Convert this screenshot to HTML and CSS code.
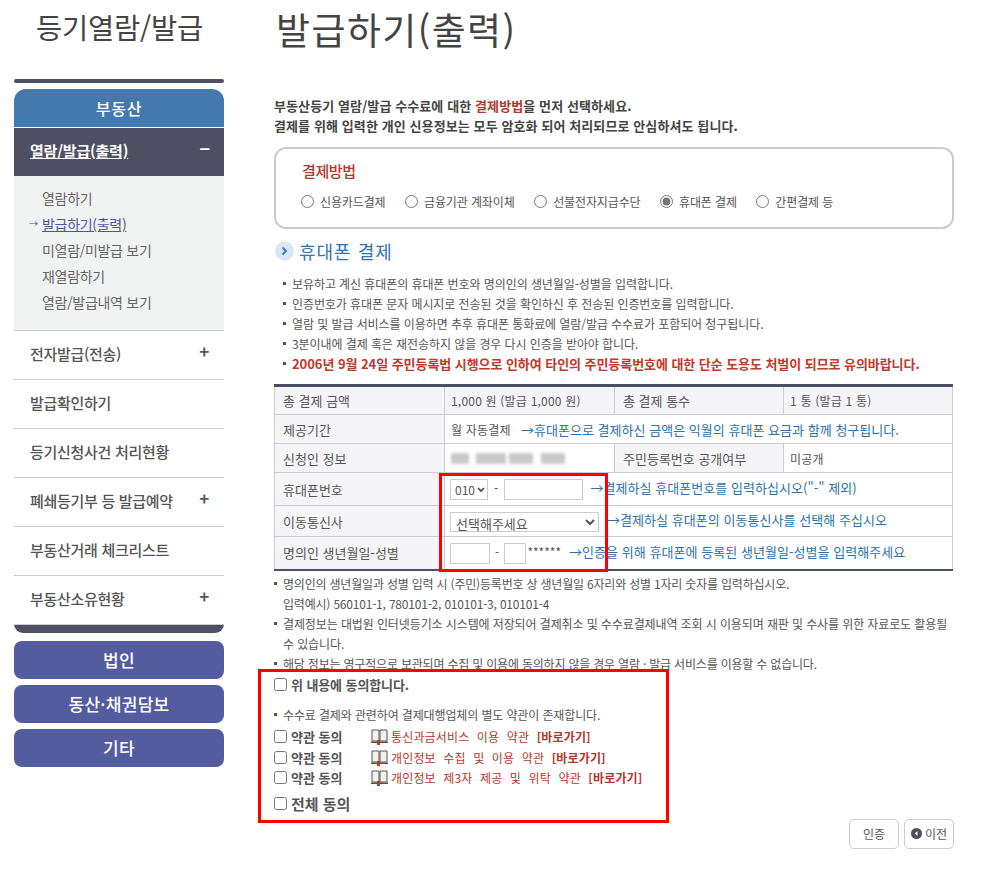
FILE: index.html
```html
<!DOCTYPE html>
<html lang="ko">
<head>
<meta charset="utf-8">
<title>발급하기(출력)</title>
<link rel="stylesheet" href="styles.css">
</head>
<body>
<div class="page">
  <aside class="side">
    <h2 class="side-title">등기열람/발급</h2>
    <div class="side-bar-top"></div>
    <div class="cat-head">부동산</div>
    <div class="active-item"><a href="#">열람/발급(출력)</a><span class="sign">−</span></div>
    <ul class="sub">
      <li>열람하기</li>
      <li class="cur"><span class="cur-arrow">→</span><a href="#">발급하기(출력)</a></li>
      <li>미열람/미발급 보기</li>
      <li>재열람하기</li>
      <li>열람/발급내역 보기</li>
    </ul>
    <div class="item"><span>전자발급(전송)</span><span class="sign">+</span></div>
    <div class="item"><span>발급확인하기</span></div>
    <div class="item"><span>등기신청사건 처리현황</span></div>
    <div class="item"><span>폐쇄등기부 등 발급예약</span><span class="sign">+</span></div>
    <div class="item"><span>부동산거래 체크리스트</span></div>
    <div class="item"><span>부동산소유현황</span><span class="sign">+</span></div>
    <div class="side-bar-bottom"></div>
    <div class="cat-btn">법인</div>
    <div class="cat-btn">동산·채권담보</div>
    <div class="cat-btn">기타</div>
  </aside>
  <main class="main">
    <h1 class="title">발급하기(출력)</h1>
    <p class="intro">부동산등기 열람/발급 수수료에 대한 <em>결제방법</em>을 먼저 선택하세요.<br>결제를 위해 입력한 개인 신용정보는 모두 암호화 되어 처리되므로 안심하셔도 됩니다.</p>
    <section class="pay-box">
      <h3 class="pay-title">결제방법</h3>
      <div class="pay-opts">
        <label class="opt"><input type="radio" name="pay">신용카드결제</label>
        <label class="opt"><input type="radio" name="pay">금융기관 계좌이체</label>
        <label class="opt"><input type="radio" name="pay">선불전자지급수단</label>
        <label class="opt"><input type="radio" name="pay" checked>휴대폰 결제</label>
        <label class="opt"><input type="radio" name="pay">간편결제 등</label>
      </div>
    </section>
    <h3 class="sec-head">
      <svg class="sec-icon" width="19" height="20" viewBox="0 0 19 20"><circle cx="9.500" cy="10" r="9.500" fill="#d9e6f3"/><path d="M7.500 6.500l3.500 3.500-3.500 3.500" fill="none" stroke="#3f7fb8" stroke-width="2"/></svg>
      휴대폰 결제
    </h3>
    <ul class="notes top-notes">
      <li>보유하고 계신 휴대폰의 휴대폰 번호와 명의인의 생년월일-성별을 입력합니다.</li>
      <li>인증번호가 휴대폰 문자 메시지로 전송된 것을 확인하신 후 전송된 인증번호를 입력합니다.</li>
      <li>열람 및 발급 서비스를 이용하면 추후 휴대폰 통화료에 열람/발급 수수료가 포함되어 청구됩니다.</li>
      <li>3분이내에 결제 혹은 재전송하지 않을 경우 다시 인증을 받아야 합니다.</li>
      <li class="warn">2006년 9월 24일 주민등록법 시행으로 인하여 타인의 주민등록번호에 대한 단순 도용도 처벌이 되므로 유의바랍니다.</li>
    </ul>
    <div class="table-wrap">
      <table class="pay-table">
        <colgroup><col class="c1"><col class="c2"><col class="c3"><col class="c4"></colgroup>
        <tr class="r29"><th>총 결제 금액</th><td class="shade">1,000 원 (발급 1,000 원)</td><th>총 결제 통수</th><td class="shade">1 통 (발급 1 통)</td></tr>
        <tr class="r29"><th>제공기간</th><td colspan="3">월 자동결제 &nbsp;<span class="hint hint-t">→휴대폰으로 결제하신 금액은 익월의 휴대폰 요금과 함께 청구됩니다.</span></td></tr>
        <tr class="r29"><th>신청인 정보</th><td><span class="blur"><i class="b1"></i><i class="b2"></i><i class="b3"></i><i class="b4"></i></span></td><th>주민등록번호 공개여부</th><td>미공개</td></tr>
        <tr class="r33"><th>휴대폰번호</th><td colspan="3" class="form-cell"><span class="sel-wrap"><select class="sel-010"><option>010</option></select><svg class="chev" width="8" height="6" viewBox="0 0 8 6"><path d="M1 1l3 3 3-3" fill="none" stroke="#444" stroke-width="1.600"/></svg></span><span class="dash">-</span><input class="in-phone" type="text"><span class="hint hint-a">→결제하실 휴대폰번호를 입력하십시오("-" 제외)</span></td></tr>
        <tr class="r31"><th>이동통신사</th><td colspan="3" class="form-cell"><select class="sel-tel"><option>선택해주세요</option></select><span class="hint hint-b">→결제하실 휴대폰의 이동통신사를 선택해 주십시오</span></td></tr>
        <tr class="r33"><th>명의인 생년월일-성별</th><td colspan="3" class="form-cell"><input class="in-birth" type="text"><span class="dash dash-b">-</span><input class="in-sex" type="text"><span class="stars">******</span><span class="hint hint-c">→인증을 위해 휴대폰에 등록된 생년월일-성별을 입력해주세요</span></td></tr>
      </table>
      <div class="mark mark-form"></div>
    </div>
    <ul class="notes low-notes">
      <li>명의인의 생년월일과 성별 입력 시 (주민)등록번호 상 생년월일 6자리와 성별 1자리 숫자를 입력하십시오.<br>입력예시) 560101-1, 780101-2, 010101-3, 010101-4</li>
      <li class="tight">결제정보는 대법원 인터넷등기소 시스템에 저장되어 결제취소 및 수수료결제내역 조회 시 이용되며 재판 및 수사를 위한 자료로도 활용될<br>수 있습니다.</li>
      <li>해당 정보는 영구적으로 보관되며 수집 및 이용에 동의하지 않을 경우 열람 · 발급 서비스를 이용할 수 없습니다.</li>
    </ul>
    <div class="agree-wrap">
      <label class="agree-main"><input type="checkbox">위 내용에 동의합니다.</label>
      <ul class="notes agree-note"><li>수수료 결제와 관련하여 결제대행업체의 별도 약관이 존재합니다.</li></ul>
      <div class="terms">
        <div class="term"><label class="term-check"><input type="checkbox">약관 동의</label><svg class="book" width="17" height="17" viewBox="0 0 17 17"><path d="M1 2h7v11H1zM9 2h7v11H9z" fill="#f4f2ea" stroke="#555"/><path d="M0 13.500h17V15H0z" fill="#555"/><path d="M6 12h3v5H6z" fill="#c23a12"/></svg><a class="term-link" href="#">통신과금서비스 이용 약관 <b>[바로가기]</b></a></div>
        <div class="term"><label class="term-check"><input type="checkbox">약관 동의</label><svg class="book" width="17" height="17" viewBox="0 0 17 17"><path d="M1 2h7v11H1zM9 2h7v11H9z" fill="#f4f2ea" stroke="#555"/><path d="M0 13.500h17V15H0z" fill="#555"/><path d="M6 12h3v5H6z" fill="#c23a12"/></svg><a class="term-link" href="#">개인정보 수집 및 이용 약관 <b>[바로가기]</b></a></div>
        <div class="term"><label class="term-check"><input type="checkbox">약관 동의</label><svg class="book" width="17" height="17" viewBox="0 0 17 17"><path d="M1 2h7v11H1zM9 2h7v11H9z" fill="#f4f2ea" stroke="#555"/><path d="M0 13.500h17V15H0z" fill="#555"/><path d="M6 12h3v5H6z" fill="#c23a12"/></svg><a class="term-link" href="#">개인정보 제3자 제공 및 위탁 약관 <b>[바로가기]</b></a></div>
      </div>
      <label class="agree-all"><input type="checkbox">전체 동의</label>
      <div class="mark mark-agree"></div>
    </div>
    <div class="actions">
      <button class="btn" type="button">인증</button>
      <button class="btn btn-prev" type="button"><svg width="11" height="11" viewBox="0 0 11 11"><circle cx="5.500" cy="5.500" r="5.500" fill="#4f4f63"/><path d="M6.500 3L3.800 5.500 6.500 8z" fill="#fff"/></svg>이전</button>
    </div>
  </main>
</div>
</body>
</html>
```
FILE: styles.css
```css
* { box-sizing: border-box; }
html, body { margin: 0; padding: 0; background: #fff; }
body { font-family: "Noto Sans CJK KR", "Noto Sans", sans-serif; color: #555; font-size: 12px; }
a { color: inherit; }
ul { list-style: none; margin: 0; padding: 0; }
.page { display: flex; align-items: flex-start; width: 1007px; height: 879px; overflow: hidden; }
.side { width: 210px; margin-left: 14px; flex: none; }
.side-title { margin: 0; height: 79px; padding-top: 7px; padding-left: 1px; text-align: center; font-size: 28.500px; line-height: 40px; font-weight: 400; color: #444; letter-spacing: -0.2px; }
.side-bar-top { height: 4px; border-radius: 2px; background: #4f4f63; margin-bottom: 6px; }
.cat-head { height: 38px; line-height: 38px; text-align: center; color: #fff; font-size: 16px; font-weight: 500; letter-spacing: 0.8px; background: #4479ad; border-radius: 12px 12px 0 0; }
.active-item { margin-top: 1px; height: 48px; background: #4f4f63; color: #fff; display: flex; justify-content: space-between; padding: 0 14px 4px 16px; align-items: center; font-size: 15px; font-weight: 700; letter-spacing: -0.2px; }
.active-item .sign { font-size: 18px; margin-top: -4px; }
.sub { height: 155px; padding-top: 9px; background: #f1f3f2; border-bottom: 1px solid #ccc; font-size: 14px; letter-spacing: -0.3px; color: #666; }
.sub li { height: 26px; line-height: 26px; padding-left: 28px; }
.sub .cur { padding-left: 15px; color: #4a559f; display: flex; }
.cur-arrow { width: 13px; font-size: 9px; }
.item { height: 49px; display: flex; justify-content: space-between; align-items: center; padding: 0 14px 4px 16px; border-bottom: 1px solid #ccc; font-size: 15px; font-weight: 500; letter-spacing: -0.3px; color: #555; }
.item .sign { font-size: 17px; font-weight: 700; margin-top: -6px; margin-right: 1px; }
.side-bar-bottom { height: 9px; margin-top: -1px; background: #4f4f63; border-radius: 0 0 10px 10px; margin-bottom: 8px; border-top: 1px solid #ccc; }
.cat-btn { height: 38px; line-height: 37px; margin-bottom: 6px; border-radius: 8px; background: #525c9e; color: #fff; text-align: center; font-size: 17px; font-weight: 500; letter-spacing: 0.3px; }
.main { width: 680px; margin-left: 50px; flex: none; position: relative; }
.title { margin: 0; height: 96px; padding-top: 5px; padding-left: 2px; font-size: 37px; line-height: 48px; font-weight: 400; color: #444; letter-spacing: 1.400px; }
.intro { margin: 0 0 11px; font-size: 13px; line-height: 20px; font-weight: 700; color: #444; letter-spacing: 0.1px; }
.intro em { font-style: normal; color: #b8352a; }
.pay-box { height: 82px; border: 2px solid #ccc; border-radius: 12px; padding: 11px 0 0 26px; }
.pay-title { margin: 0 0 9px; font-size: 15px; line-height: 22px; font-weight: 500; color: #b8352a; letter-spacing: -0.4px; }
.pay-opts { display: flex; margin-left: -1px; }
.opt { display: flex; align-items: center; height: 20px; font-size: 12px; color: #555; margin-right: 19.500px; letter-spacing: -0.12px; }
.opt input { margin: 0 6px 0 0; width: 13px; height: 13px; accent-color: #777; }
.sec-head { margin: 10px 0 0; height: 24px; display: flex; align-items: center; gap: 5px; font-size: 18px; line-height: 24px; font-weight: 400; color: #2f75b5; letter-spacing: 1px; }
.sec-icon { flex: none; margin-left: 1px; }
.notes li { position: relative; padding-left: 9px; line-height: 20px; letter-spacing: -0.08px; }
.notes li::before { content: ""; position: absolute; left: 0; top: 8px; width: 3px; height: 3px; background: #555; }
.top-notes { margin: 11px 0 10px 9px; }
.top-notes .warn { color: #c0392b; font-weight: 700; font-size: 13px; letter-spacing: -0.06px; }
.table-wrap { position: relative; width: 679px; }
.pay-table { width: 679px; border-collapse: collapse; table-layout: fixed; border-top: 3px solid #4f4f63; border-bottom: 2px solid #4f4f63; font-size: 12px; }
.c1, .c2 { width: 170px; }
.c3 { width: 169px; }
.pay-table th, .pay-table td { border: 1px solid #ccc; padding: 0 0 0 6px; font-weight: 400; text-align: left; white-space: nowrap; color: #555; letter-spacing: 0.2px; }
.pay-table th { background: #f5f5f7; padding-left: 8px; font-size: 13px; letter-spacing: 0; }
.pay-table .shade { background: #f5f5f7; }
.pay-table .form-cell { padding-left: 5px; }
.r29 { height: 29px; }
.r33 { height: 33px; }
.r31 { height: 31px; }
.hint { color: #2a72ad; font-size: 13px; letter-spacing: 0; }
.hint-t { margin-left: 3px; letter-spacing: 0.03px; }
.hint-a { margin-left: 7px; letter-spacing: 0.05px; }
.hint-b { margin-left: 8px; letter-spacing: 0.05px; }
.hint-c { margin-left: 8px; letter-spacing: 0.05px; }
.dash { margin: 0 6px; }
.dash-b { margin: 0 5px; }
.blur { display: flex; height: 11px; filter: blur(1.500px); }
.blur i { display: block; background: #c9c9c9; height: 11px; }
.b1 { width: 18px; margin-right: 7px; }
.b2 { width: 30px; margin-right: 3px; }
.b3 { width: 24px; margin-right: 8px; }
.b4 { width: 24px; background: #ddd; }
.sel-wrap { position: relative; display: inline-block; vertical-align: middle; }
.chev { position: absolute; right: 3px; top: 8px; pointer-events: none; }
.sel-010 { display: block; width: 38px; height: 21px; font: 12px "Noto Sans CJK KR", sans-serif; padding: 0 0 0 4px; border: 1px solid #ccc; background: #fff; color: #555; appearance: none; border-radius: 0; }
.in-phone { width: 79px; height: 21px; border: 1px solid #ccc; padding: 0; vertical-align: middle; }
.sel-tel { width: 149px; height: 20px; font: 13px "Noto Sans CJK KR", sans-serif; padding: 0 0 0 1px; border: 1px solid #ccc; background: #fff; color: #555; vertical-align: middle; }
.in-birth { width: 40px; height: 21px; border: 1px solid #ccc; padding: 0; vertical-align: middle; }
.in-sex { width: 22px; height: 21px; border: 1px solid #ccc; padding: 0; vertical-align: middle; }
.stars { margin-left: 1px; letter-spacing: 0; }
.mark { position: absolute; border: 3px solid #f00; pointer-events: none; }
.mark-form { left: 165px; top: 89px; width: 169px; height: 99px; }
.low-notes { margin-top: 3px; }
.low-notes li { letter-spacing: -0.2px; }
.low-notes .tight { letter-spacing: -0.11px; }
.agree-wrap { position: relative; height: 142px; }
.agree-main { display: flex; align-items: center; height: 20px; margin-top: 1px; font-size: 13px; font-weight: 700; color: #555; letter-spacing: -0.1px; }
.agree-wrap input { margin: 0 4px 0 0; width: 13px; height: 13px; }
.agree-note { margin-top: 10px; }
.agree-note li { letter-spacing: -0.13px; }
.terms { margin-top: 2px; }
.term { display: flex; align-items: center; height: 20.500px; font-size: 12px; }
.term-check { display: flex; align-items: center; width: 97px; font-size: 13px; font-weight: 700; flex: none; }
.book { flex: none; margin-right: 3px; }
.term-link { color: #b8352a; text-decoration: none; letter-spacing: 0.15px; word-spacing: 4px; }
.term-link b { font-weight: 700; }
.agree-all { display: flex; align-items: center; height: 20px; margin-top: 5px; font-size: 15px; font-weight: 700; }
.mark-agree { left: -16px; top: -6px; width: 411px; height: 154px; }
.actions { display: flex; justify-content: flex-end; gap: 5px; margin-top: 2px; }
.btn { height: 30px; border: 1px solid #ccc; border-radius: 5px; background: #fff; font: 12px "Noto Sans CJK KR", sans-serif; color: #555; padding: 0; width: 50px; display: flex; align-items: center; justify-content: center; gap: 3px; }
```
